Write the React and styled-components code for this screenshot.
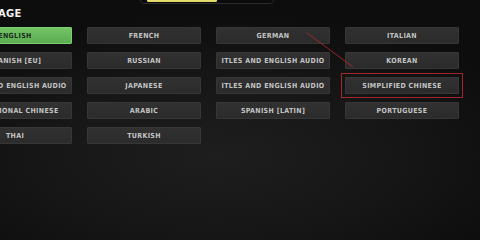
import React from 'react'
import styled, { createGlobalStyle } from 'styled-components'

const GlobalStyle = createGlobalStyle`
  html, body {
    margin: 0;
    padding: 0;
    width: 480px;
    height: 240px;
    overflow: hidden;
    background: #121212;
  }
`

const Screen = styled.div`
  position: relative;
  width: 480px;
  height: 240px;
  overflow: hidden;
  background: radial-gradient(ellipse 70% 60% at 45% 65%, #1e1e1e 0%, #161616 55%, #0d0d0d 100%);
  font-family: 'DejaVu Sans Condensed', 'DejaVu Sans', sans-serif;
`

const Page = styled.div`
  display: flex;
  flex-direction: column;
  margin-left: -42px;
`

const TopStrip = styled.div`
  height: 7px;
  display: flex;
  padding-left: 182px;
`

const StatusBox = styled.div`
  width: 134px;
  height: 14px;
  margin-top: -10px;
  box-sizing: border-box;
  border: 1px solid #2c2c2c;
  border-radius: 4px;
  background: #0a0a0a;
  display: flex;
  flex-direction: column;
  justify-content: flex-end;
  padding: 0 56px 0 6px;
`

const StatusText = styled.div`
  font-size: 4px;
  line-height: 4px;
  color: #6a6a6a;
  text-align: right;
  margin-right: -40px;
  white-space: nowrap;
`

const LoadBar = styled.div`
  height: 3px;
  border-radius: 2px;
  background: linear-gradient(#f4ee92, #d8cf55);
  margin-bottom: 1px;
`

const Title = styled.h1`
  margin: 0;
  padding-left: 0;
  font-family: 'DejaVu Sans', sans-serif;
  font-size: 10px;
  line-height: 14px;
  font-weight: bold;
  color: #f2f2f2;
  letter-spacing: 0.3px;
`

const Grid = styled.div`
  display: grid;
  grid-template-columns: repeat(4, 114px);
  grid-auto-rows: 17px;
  column-gap: 15px;
  row-gap: 8px;
  margin-top: 6px;
`

const LangButton = styled.div`
  box-sizing: border-box;
  display: flex;
  align-items: center;
  justify-content: center;
  overflow: hidden;
  white-space: nowrap;
  border-radius: ${p => (p.$marked ? '0' : '1px')};
  font-size: 7px;
  font-weight: bold;
  letter-spacing: 0.35px;
  background: ${p => (p.$active ? 'linear-gradient(#72c565, #5cab52)' : 'linear-gradient(#313131, #2b2b2b)')};
  border: 1px solid ${p => (p.$active ? '#7dcf70' : '#373737')};
  color: ${p => (p.$active ? '#1c2a1a' : '#c4c4c4')};
  outline: ${p => (p.$marked ? '1.5px solid #a3262a' : 'none')};
  outline-offset: 3px;
`

const Arrow = styled.svg`
  position: absolute;
  left: 0;
  top: 0;
  pointer-events: none;
`

const languages = [
  'ENGLISH', 'FRENCH', 'GERMAN', 'ITALIAN',
  'SPANISH [EU]', 'RUSSIAN', 'ITLES AND ENGLISH AUDIO', 'KOREAN',
  'ITLES AND ENGLISH AUDIO', 'JAPANESE', 'ITLES AND ENGLISH AUDIO', 'SIMPLIFIED CHINESE',
  'TRADITIONAL CHINESE', 'ARABIC', 'SPANISH [LATIN]', 'PORTUGUESE',
  'THAI', 'TURKISH',
]

export default function App() {
  return (
    <Screen>
      <GlobalStyle />
      <Page>
        <TopStrip>
          <StatusBox>
            <StatusText>Restarting Game to Apply</StatusText>
            <LoadBar />
          </StatusBox>
        </TopStrip>
        <Title>LANGUAGE</Title>
        <Grid>
          {languages.map((name, i) => (
            <LangButton key={i} $active={i === 0} $marked={name === 'SIMPLIFIED CHINESE'}>
              {name}
            </LangButton>
          ))}
        </Grid>
      </Page>
      <Arrow width="480" height="240">
        <line x1="307" y1="33" x2="353" y2="67" stroke="#b0282c" strokeOpacity="0.85" strokeWidth="1" />
      </Arrow>
    </Screen>
  )
}
